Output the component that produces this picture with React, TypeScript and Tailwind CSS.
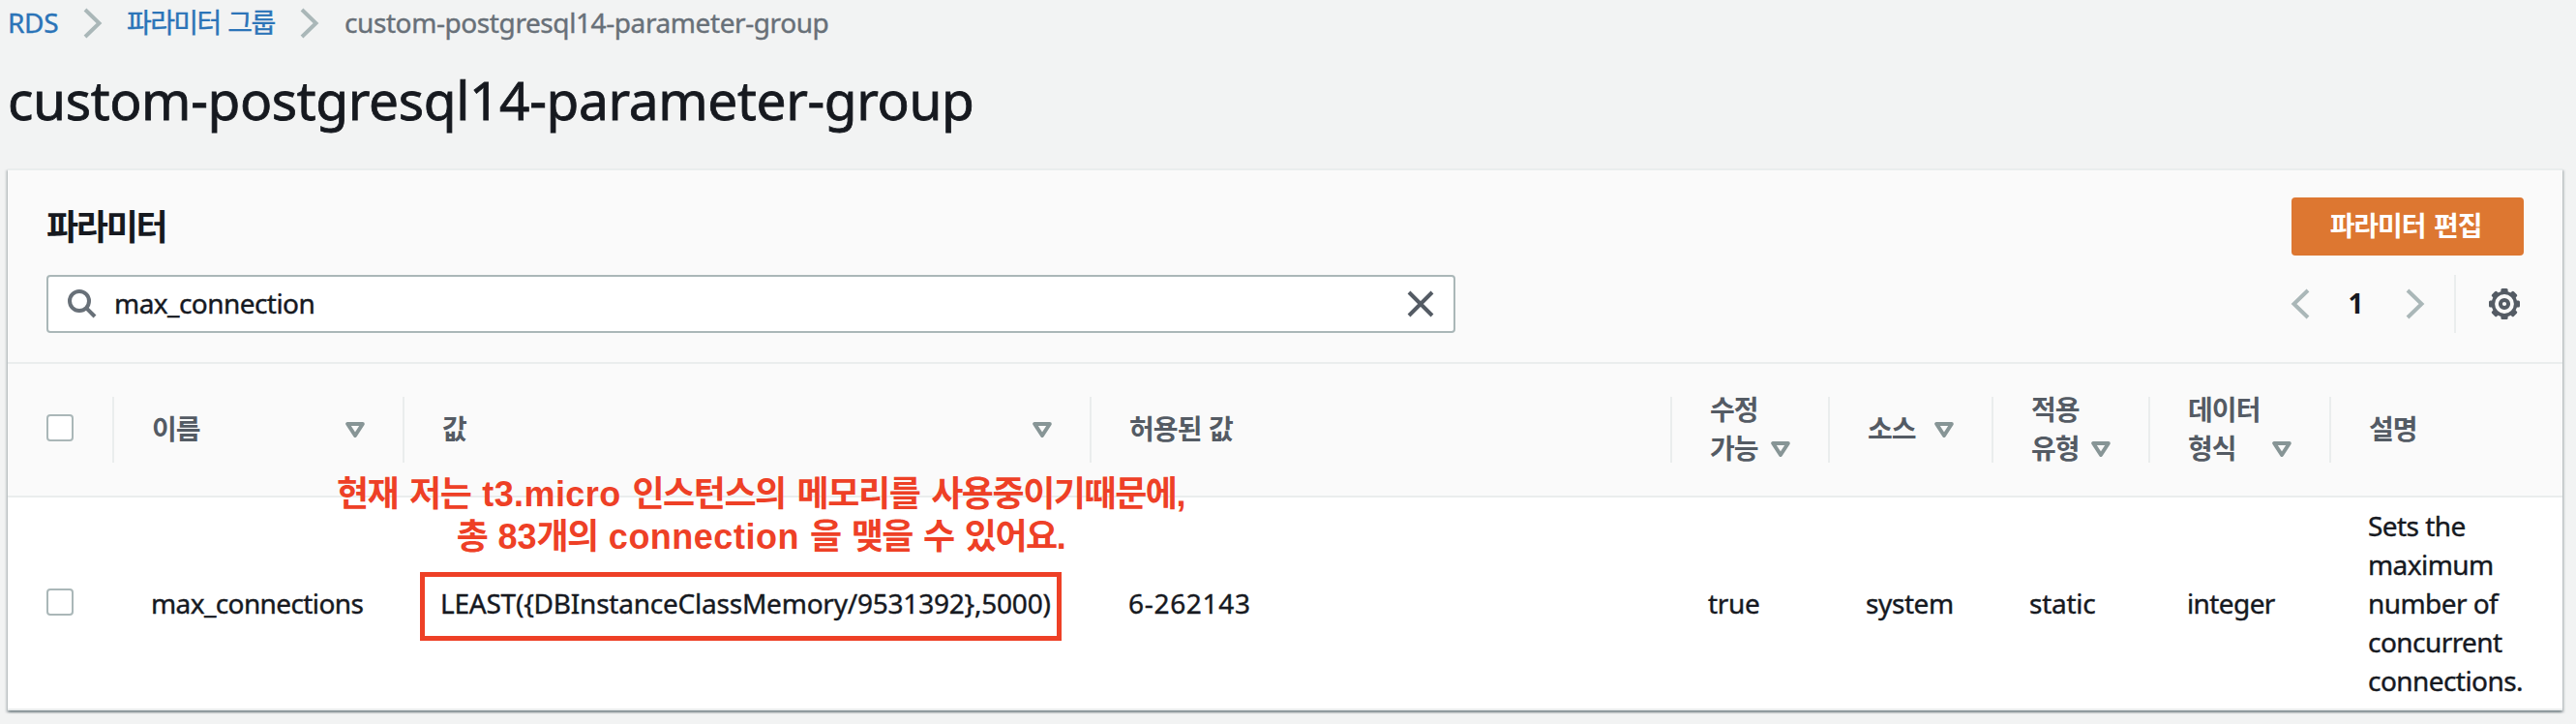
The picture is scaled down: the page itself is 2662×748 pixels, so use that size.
import React from "react";

const COLS = "grid grid-cols-[110px_300px_710px_600px_163px_169px_162px_187px_239px]";

function Chevron({ flip = false }: { flip?: boolean }) {
  return (
    <svg width="20" height="32" viewBox="0 0 20 32" fill="none" stroke="#aab7b8" strokeWidth="4" className={flip ? "-scale-x-100" : ""}>
      <path d="M2 2 L16.5 16 L2 30" />
    </svg>
  );
}

function SortIcon() {
  return (
    <svg width="20" height="16" viewBox="0 0 20 16" fill="none" stroke="#879596" strokeWidth="4" strokeLinejoin="round" className="shrink-0">
      <path d="M2.2 2 H17.8 L10 14 Z" />
    </svg>
  );
}

function Checkbox() {
  return <span className="block size-7 rounded-[4px] border-2 border-[#aab7b8] bg-white" />;
}

function GearIcon() {
  const teeth = [0, 45, 90, 135, 180, 225, 270, 315];
  return (
    <svg width="32" height="32" viewBox="0 0 32 32" fill="none" stroke="#545b64">
      {teeth.map((a) => (
        <rect key={a} x="12.4" y="0" width="7.2" height="5" rx="1.5" fill="#545b64" stroke="none" transform={`rotate(${a} 16 16)`} />
      ))}
      <circle cx="16" cy="16" r="11.6" strokeWidth="3.4" />
      <circle cx="16" cy="16" r="4.1" strokeWidth="4" />
    </svg>
  );
}

type Head = { lines: string[]; sort?: boolean; last?: boolean };

const HEADS: Head[] = [
  { lines: ["이름"], sort: true },
  { lines: ["값"], sort: true },
  { lines: ["허용된 값"] },
  { lines: ["수정", "가능"], sort: true },
  { lines: ["소스"], sort: true },
  { lines: ["적용", "유형"], sort: true },
  { lines: ["데이터", "형식"], sort: true },
  { lines: ["설명"], last: true },
];

function HeadCell({ lines, sort, last }: Head) {
  return (
    <div className={`flex h-[68px] items-center justify-between pl-[39px] pr-[39px] ${last ? "" : "border-r-2 border-[#eaeded]"}`}>
      <div className="pb-0.5 text-[28px] font-bold leading-10 tracking-[-0.9px] text-[#545b64] [word-spacing:1px]">
        {lines.map((l) => (
          <div key={l} className="whitespace-nowrap">{l}</div>
        ))}
      </div>
      {sort && (
        <div className={lines.length > 1 ? "pt-10" : ""}>
          <SortIcon />
        </div>
      )}
    </div>
  );
}

export default function App() {
  return (
    <div className="h-[748px] w-[2662px] overflow-hidden bg-[#f2f3f3] pl-2 font-['Noto_Sans','Noto_Sans_CJK_KR',sans-serif] text-[#16191f]">
      <nav className="flex h-12 items-center text-[28px] leading-[46px] tracking-[-0.41px] text-[#2b74b8] [-webkit-text-stroke:0.4px]">
        <a className="w-[78px] pb-0.5 tracking-[-0.3px]">RDS</a>
        <Chevron />
        <a className="ml-[25px] w-[179px] whitespace-nowrap pb-0.5 tracking-[-1.6px] [word-spacing:2px]">파라미터 그룹</a>
        <Chevron />
        <span className="ml-[26px] pb-0.5 text-[#687078]">custom-postgresql14-parameter-group</span>
      </nav>

      <h1 className="mt-[19px] h-[107px] text-[55px] leading-[72px] tracking-[-0.36px] [-webkit-text-stroke:0.8px]">custom-postgresql14-parameter-group</h1>

      <main className="relative h-[560px] w-[2640px] border-t-2 border-[#eaeded] bg-white shadow-[0_2px_2px_0_rgba(0,28,36,0.3),2px_2px_2px_0_rgba(0,28,36,0.15),-2px_2px_2px_0_rgba(0,28,36,0.15)]">
        <header className="h-[200px] border-b-2 border-[#eaeded] bg-[#fafafa] px-10 pt-7">
          <div className="flex h-[60px] items-center justify-between">
            <h2 className="pt-0.5 text-[36px] font-bold leading-[60px] tracking-[-2.3px]">파라미터</h2>
            <button className="h-[60px] w-60 rounded-[4px] bg-[#dd7731] pb-0.5 pr-1 text-[28px] font-bold leading-[58px] tracking-[-1.1px] text-white [word-spacing:2.5px]">파라미터 편집</button>
          </div>
          <div className="mt-5 flex h-[60px] items-center justify-between">
            <div className="flex h-[60px] w-[1456px] items-center rounded-[4px] border-2 border-[#aab7b8] bg-white pl-5 pr-5">
              <svg width="30" height="30" viewBox="0 0 30 30" fill="none" stroke="#687078" strokeWidth="4">
                <circle cx="12" cy="12" r="10" />
                <path d="M18.8 18.8 L28 28" />
              </svg>
              <span className="ml-[18px] flex-1 pb-0.5 text-[28px] leading-[54px] tracking-[-0.55px] [-webkit-text-stroke:0.4px]">max_connection</span>
              <svg width="28" height="28" viewBox="0 0 28 28" fill="none" stroke="#545b64" strokeWidth="4">
                <path d="M2 2 L26 26 M26 2 L2 26" />
              </svg>
            </div>
            <div className="flex h-[60px] items-center">
              <Chevron flip />
              <span className="w-[99px] pb-0.5 pr-1 text-center text-[28px] font-bold leading-[58px]">1</span>
              <Chevron />
              <span className="ml-[30px] mr-[34px] h-[60px] w-0.5 bg-[#eaeded]" />
              <GearIcon />
              <span className="w-1" />
            </div>
          </div>
        </header>

        <div className={`${COLS} h-[138px] items-center border-b-2 border-[#eaeded] bg-[#fafafa]`}>
          <div className="flex h-[68px] items-center border-r-2 border-[#eaeded] pb-1 pl-10">
            <Checkbox />
          </div>
          {HEADS.map((h) => (
            <HeadCell key={h.lines.join("")} {...h} />
          ))}
        </div>

        <div className={`${COLS} h-[220px] items-center border-b-2 border-[#eaeded] text-[28px] leading-10 [-webkit-text-stroke:0.4px]`}>
          <div className="pb-0.5 pl-10"><Checkbox /></div>
          <div className="pl-[38px] tracking-[-0.6px]">max_connections</div>
          <div className="pl-[37px] tracking-[-0.22px]">LEAST({"{"}DBInstanceClassMemory/9531392{"}"},5000)</div>
          <div className="pl-[38px] tracking-[0.7px]">6-262143</div>
          <div className="pl-[37px] tracking-[-0.3px]">true</div>
          <div className="pl-[37px] tracking-[-0.4px]">system</div>
          <div className="pl-[37px] tracking-[-0.25px]">static</div>
          <div className="pl-[38px] tracking-[-0.6px]">integer</div>
          <div className="pl-[38px] tracking-[-0.56px]">Sets the<br />maximum<br />number of<br />concurrent<br />connections.</div>
        </div>

        <div className="absolute left-[426px] top-[415px] h-[71px] w-[663px] border-[5px] border-[#ee4026]" />
        <p className="absolute left-[339px] top-[313px] w-[878px] whitespace-nowrap text-center font-['Liberation_Sans','Noto_Sans_CJK_KR',sans-serif] text-[36px] font-bold leading-[44px] tracking-[-1.45px] text-[#ee4026] [word-spacing:3.3px]">
          현재 저는 <span className="tracking-[0.4px]">t3.micro</span> 인스턴스의 메모리를 사용중이기때문에,
          <br />
          <span className="[word-spacing:2.5px]">
            총 <span className="tracking-normal">83</span>개의 <span className="tracking-[0.5px]">connection</span> 을 맺을 수 있어요.
          </span>
        </p>
      </main>
    </div>
  );
}
